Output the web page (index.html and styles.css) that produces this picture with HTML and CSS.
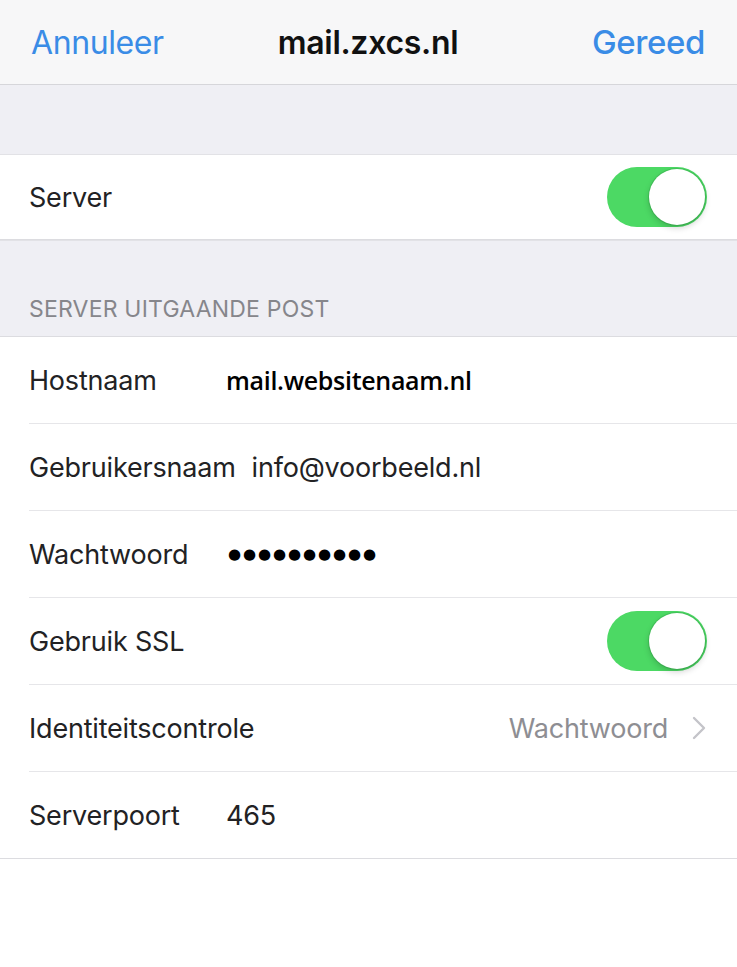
FILE: index.html
```html
<!DOCTYPE html>
<html lang="nl">
<head>
    <meta charset="UTF-8">
    <meta name="viewport" content="width=device-width, initial-scale=1.0">
    <title>mail.zxcs.nl</title>
    <link rel="stylesheet" href="styles.css">
</head>
<body>

<div class="navbar">
    <span class="nav-btn">Annuleer</span>
    <span class="nav-title">mail.zxcs.nl</span>
    <span class="nav-btn done">Gereed</span>
</div>

<div class="spacer"></div>

<div class="group">
    <div class="row single">
        <span class="label">Server</span>
        <span class="toggle"><span class="knob"></span></span>
    </div>
</div>

<div class="section-head">SERVER UITGAANDE POST</div>

<div class="group">
    <div class="row">
        <span class="label">Hostnaam</span>
        <span class="value host">mail.websitenaam.nl</span>
    </div>
    <div class="row">
        <span class="label">Gebruikersnaam</span>
        <span class="value">info@voorbeeld.nl</span>
    </div>
    <div class="row">
        <span class="label">Wachtwoord</span>
        <span class="value dots">&#9679;&#9679;&#9679;&#9679;&#9679;&#9679;&#9679;&#9679;&#9679;&#9679;</span>
    </div>
    <div class="row">
        <span class="label">Gebruik SSL</span>
        <span class="toggle"><span class="knob"></span></span>
    </div>
    <div class="row">
        <span class="label">Identiteitscontrole</span>
        <span class="detail">Wachtwoord</span>
        <svg class="chevron" width="14" height="24" viewBox="0 0 14 24">
            <path d="M2 2 L12 12 L2 22" fill="none" stroke="#c4c4c9" stroke-width="2.4" stroke-linecap="round" stroke-linejoin="round"/>
        </svg>
    </div>
    <div class="row">
        <span class="label">Serverpoort</span>
        <span class="value">465</span>
    </div>
</div>

</body>
</html>
```

FILE: styles.css
```css
body {
    margin: 0;
    background-color: #ffffff;
    font-family: 'Inter', 'Liberation Sans', sans-serif;
    color: #1c1c1e;
}

.navbar {
    height: 84px;
    background-color: #f7f7f8;
    border-bottom: 1px solid #d6d6da;
    display: grid;
    grid-template-columns: 1fr auto 1fr;
    align-items: center;
    padding: 0 32px 0 31px;
}

.nav-btn {
    color: #3a8ce6;
    font-size: 32px;
    letter-spacing: -0.4px;
}

.nav-btn.done {
    font-weight: 500;
    font-size: 33px;
    justify-self: end;
}

.nav-title {
    font-size: 32px;
    font-weight: 600;
    color: #111111;
    letter-spacing: -0.3px;
}

.spacer {
    height: 69px;
    background-color: #efeff4;
    border-bottom: 1px solid #e2e2e6;
}

.group {
    background-color: #ffffff;
    border-bottom: 1px solid #dcdce0;
}

.row {
    height: 86px;
    margin-left: 29px;
    padding-right: 30px;
    display: flex;
    align-items: center;
    gap: 16px;
    border-bottom: 1px solid #e6e6e9;
}

.row:last-child,
.row.single {
    border-bottom: none;
}

.row.single {
    height: 84px;
}

.label {
    font-size: 27px;
    color: #222224;
    min-width: 181px;
    letter-spacing: -0.2px;
}

.value {
    font-size: 27px;
    color: #222224;
    letter-spacing: -0.2px;
}

.value.host {
    font-family: 'Open Sans', sans-serif;
    font-weight: 600;
    font-size: 25px;
    color: #000000;
    letter-spacing: -0.3px;
}

.value.dots {
    font-family: 'DejaVu Sans', sans-serif;
    font-size: 15px;
    letter-spacing: 1.9px;
    color: #000000;
    padding-left: 2px;
}

.detail {
    margin-left: auto;
    font-size: 27px;
    color: #8e8e93;
    letter-spacing: -0.2px;
}

.chevron {
    margin-left: 8px;
    margin-right: 1px;
}

.toggle {
    margin-left: auto;
    width: 100px;
    height: 60px;
    border-radius: 30px;
    background-color: #4cd964;
    display: flex;
    align-items: center;
    justify-content: flex-end;
    padding-right: 2px;
    box-sizing: border-box;
}

.knob {
    width: 56px;
    height: 56px;
    border-radius: 50%;
    background-color: #ffffff;
    box-shadow: 0 3px 6px rgba(0, 0, 0, 0.18), 0 0 0 1px rgba(40, 140, 60, 0.25);
}

.section-head {
    height: 97px;
    background-color: #efeff4;
    border-bottom: 1px solid #dcdce0;
    border-top: 1px solid #e2e2e6;
    box-sizing: border-box;
    display: flex;
    align-items: flex-end;
    padding: 0 0 13px 29px;
    font-size: 23px;
    color: #86868b;
    letter-spacing: 0.2px;
}
```
